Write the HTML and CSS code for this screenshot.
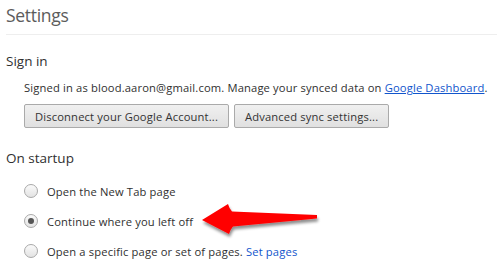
FILE: index.html
```html
<!DOCTYPE html>
<html lang="en">
<head>
    <meta charset="UTF-8">
    <title>Settings</title>
    <link rel="stylesheet" href="styles.css">
</head>
<body>
    <div class="page">
        <h1 class="title">Settings</h1>

        <div class="section">
            <h3>Sign in</h3>
            <div class="section-body">
                <p class="sync-text">Signed in as blood.aaron@gmail.com. Manage your synced data on <a href="#">Google Dashboard</a>.</p>
                <div class="buttons">
                    <button>Disconnect your Google Account...</button>
                    <button>Advanced sync settings...</button>
                </div>
            </div>
        </div>

        <div class="section startup">
            <h3>On startup</h3>
            <div class="section-body radios">
                <label class="radio"><span class="dot"></span>Open the New Tab page</label>
                <label class="radio"><span class="dot checked"></span>Continue where you left off</label>
                <label class="radio"><span class="dot"></span>Open a specific page or set of pages.&nbsp;<a href="#" class="plain">Set pages</a></label>
            </div>
        </div>

        <!-- annotation arrow drawn over the page -->
        <svg class="arrow" width="130" height="45" viewBox="0 0 130 45">
            <defs>
                <filter id="shadow" x="-10%" y="-30%" width="130%" height="180%">
                    <feGaussianBlur in="SourceAlpha" stdDeviation="1.5"/>
                    <feOffset dx="1" dy="3"/>
                    <feComponentTransfer><feFuncA type="linear" slope="0.45"/></feComponentTransfer>
                    <feMerge><feMergeNode/><feMergeNode in="SourceGraphic"/></feMerge>
                </filter>
            </defs>
            <path d="M2 20 L28 4 Q29 8 32 11.5 L117 15 L117 18.5 L33 26.5 Q30 30 29 34 Z" fill="#ff0000" filter="url(#shadow)"/>
        </svg>
    </div>
</body>
</html>
```

FILE: styles.css
```css
body {
    margin: 0;
    font-family: "Open Sans", Arial, sans-serif;
    color: #303030;
    background: white;
}
.page {
    position: relative;
    padding-left: 6px;
}
.title {
    margin: 0;
    padding-top: 1px;
    height: 33px;
    font-size: 17.5px;
    letter-spacing: -0.3px;
    font-weight: normal;
    line-height: 28px;
    color: #5c5c5c;
    border-bottom: 1px solid #eeeeee;
}
.section h3 {
    margin: 0;
    font-size: 13.5px;
    font-weight: normal;
    line-height: 20px;
}
.section {
    padding-top: 16px;
}
.section-body {
    padding-left: 18px;
}
.sync-text {
    margin: 9px 0 8px;
    font-size: 11.2px;
    letter-spacing: 0.15px;
    line-height: 16px;
    white-space: nowrap;
}
a {
    color: #1155cc;
}
a.plain {
    text-decoration: none;
}
.buttons {
    display: flex;
    gap: 5px;
}
button {
    font-family: inherit;
    font-size: 11.2px;
    letter-spacing: 0.15px;
    color: #333;
    height: 24px;
    padding: 0 10px;
    border: 1px solid #aaaaaa;
    border-radius: 2px;
    background: linear-gradient(#f0f0f0, #e0e0e0);
}
.startup {
    padding-top: 20px;
}
.radios {
    display: flex;
    flex-direction: column;
    padding-top: 8px;
}
.radio {
    display: flex;
    align-items: center;
    height: 30px;
    font-size: 11.2px;
    letter-spacing: 0.15px;
}
.dot {
    width: 12px;
    height: 12px;
    border: 1px solid #a9a9a9;
    border-radius: 50%;
    background: linear-gradient(#fafafa, #e3e3e3);
    margin-right: 9px;
    position: relative;
}
.dot.checked::after {
    content: "";
    position: absolute;
    left: 3px;
    top: 3px;
    width: 6px;
    height: 6px;
    border-radius: 50%;
    background: #555;
}
.arrow {
    position: absolute;
    left: 200px;
    top: 200px;
}
```
